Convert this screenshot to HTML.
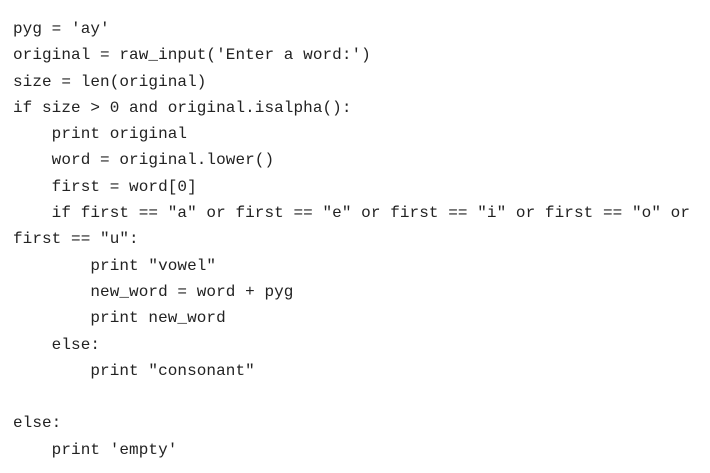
<!DOCTYPE html>
<html><head><style>
html,body{margin:0;padding:0;background:#fff;width:710px;height:473px;overflow:hidden}
pre{margin:0;position:absolute;left:13px;top:16px;font-family:"Liberation Mono",monospace;font-size:16px;line-height:26.3px;letter-spacing:0.07px;color:#222}
</style></head><body><pre>pyg = 'ay'
original = raw_input('Enter a word:')
size = len(original)
if size &gt; 0 and original.isalpha():
    print original
    word = original.lower()
    first = word[0]
    if first == "a" or first == "e" or first == "i" or first == "o" or
first == "u":
        print "vowel"
        new_word = word + pyg
        print new_word
    else:
        print "consonant"

else:
    print 'empty'</pre></body></html>
